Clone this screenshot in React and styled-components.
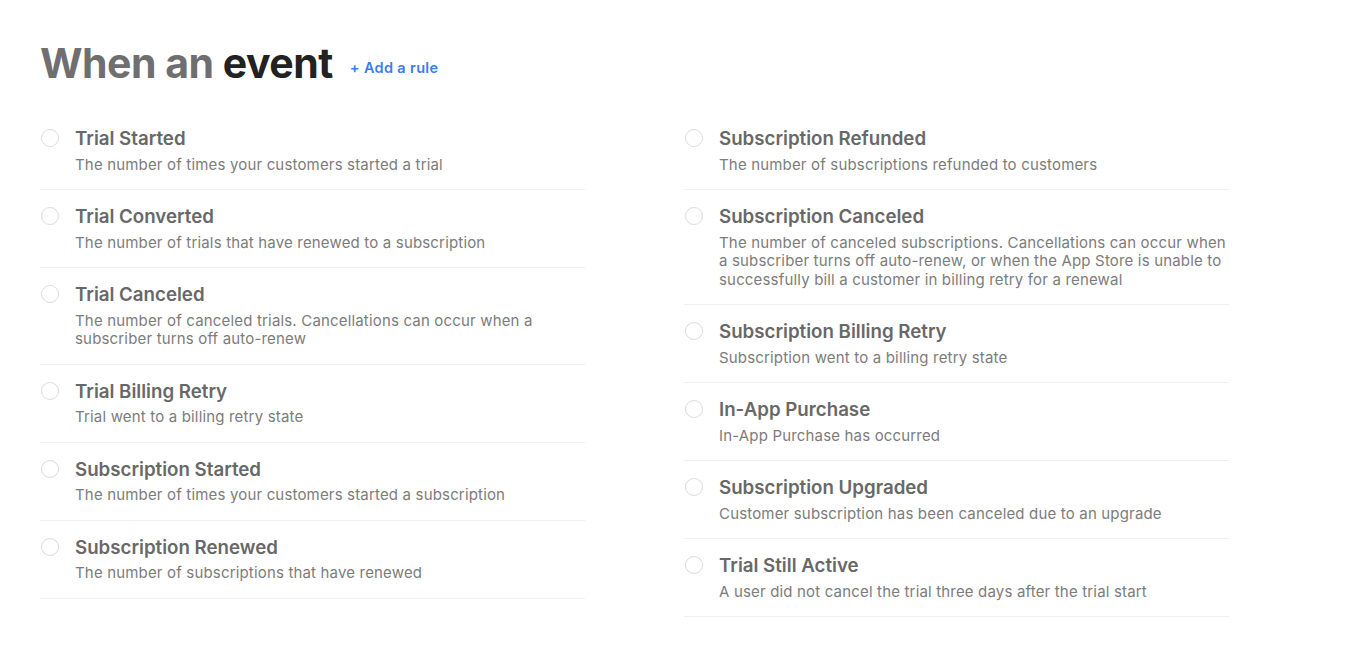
import React from 'react';
import styled, { createGlobalStyle } from 'styled-components';

const GlobalStyle = createGlobalStyle`
  html, body {
    margin: 0;
    padding: 0;
    background: #ffffff;
    font-family: Inter, "Noto Sans", "Liberation Sans", sans-serif;
  }
`;

const Page = styled.div`
  padding: 38px 40px 0 40px;
`;

const Header = styled.div`
  display: flex;
  align-items: center;
  gap: 17px;
  margin-bottom: 24px;
`;

const Title = styled.h1`
  margin: 0;
  font-size: 41px;
  font-weight: 700;
  letter-spacing: -0.5px;
  color: #6f6f6f;
  line-height: 50px;
  span {
    color: #222222;
  }
`;

const AddRule = styled.a`
  margin-top: 8px;
  font-size: 14.5px;
  font-weight: 600;
  letter-spacing: 0.35px;
  color: #3b7cf0;
  text-decoration: none;
  cursor: pointer;
`;

const Columns = styled.div`
  display: grid;
  grid-template-columns: 545px 545px;
  column-gap: 99px;
  align-items: start;
`;

const List = styled.div`
  display: flex;
  flex-direction: column;
`;

const Row = styled.label`
  display: flex;
  gap: 16px;
  padding: 15px 0 14.8px 1px;
  border-bottom: 1px solid #efefef;
  cursor: pointer;
`;

const Radio = styled.span`
  flex: none;
  width: 16px;
  height: 16px;
  margin-top: 2px;
  border-radius: 50%;
  border: 1.5px solid #dcdcdc;
  background: #fff;
`;

const Text = styled.div`
  flex: 1;
  display: flex;
  flex-direction: column;
  gap: 4.5px;
`;

const Name = styled.div`
  font-size: 18.7px;
  font-weight: 600;
  color: #686868;
  line-height: 24px;
`;

const Desc = styled.div`
  font-size: 15px;
  letter-spacing: 0.17px;
  color: #7c7c7c;
  line-height: 18.7px;
`;

const left = [
  ['Trial Started', 'The number of times your customers started a trial'],
  ['Trial Converted', 'The number of trials that have renewed to a subscription'],
  ['Trial Canceled', 'The number of canceled trials. Cancellations can occur when a subscriber turns off auto-renew'],
  ['Trial Billing Retry', 'Trial went to a billing retry state'],
  ['Subscription Started', 'The number of times your customers started a subscription'],
  ['Subscription Renewed', 'The number of subscriptions that have renewed'],
];

const right = [
  ['Subscription Refunded', 'The number of subscriptions refunded to customers'],
  ['Subscription Canceled', 'The number of canceled subscriptions. Cancellations can occur when a subscriber turns off auto-renew, or when the App Store is unable to successfully bill a customer in billing retry for a renewal'],
  ['Subscription Billing Retry', 'Subscription went to a billing retry state'],
  ['In-App Purchase', 'In-App Purchase has occurred'],
  ['Subscription Upgraded', 'Customer subscription has been canceled due to an upgrade'],
  ['Trial Still Active', 'A user did not cancel the trial three days after the trial start'],
];

const EventList = ({ items }) => (
  <List>
    {items.map(([name, desc]) => (
      <Row key={name}>
        <Radio />
        <Text>
          <Name>{name}</Name>
          <Desc>{desc}</Desc>
        </Text>
      </Row>
    ))}
  </List>
);

export default function App() {
  return (
    <>
      <GlobalStyle />
      <Page>
        <Header>
          <Title>When an <span>event</span></Title>
          <AddRule>+ Add a rule</AddRule>
        </Header>
        <Columns>
          <EventList items={left} />
          <EventList items={right} />
        </Columns>
      </Page>
    </>
  );
}
